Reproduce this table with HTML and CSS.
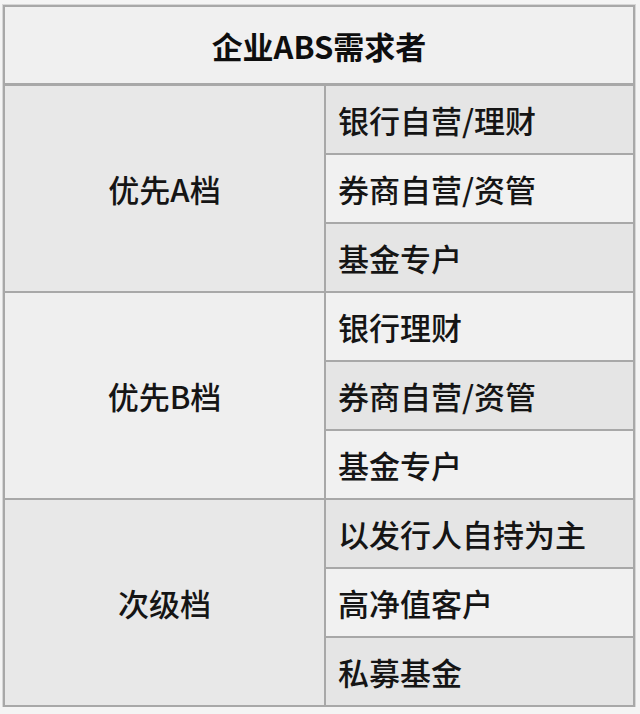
FILE: index.html
```html
<!DOCTYPE html>
<html lang="zh">
<head>
<meta charset="utf-8">
<link rel="stylesheet" href="styles.css">
</head>
<body>
<div class="table">
  <div class="head">企业ABS需求者</div>

  <div class="tier tier-a dark">优先A档</div>
  <div class="item dark">银行自营/理财</div>
  <div class="item light">券商自营/资管</div>
  <div class="item dark">基金专户</div>

  <div class="tier tier-b light">优先B档</div>
  <div class="item light">银行理财</div>
  <div class="item dark">券商自营/资管</div>
  <div class="item light">基金专户</div>

  <div class="tier tier-c dark">次级档</div>
  <div class="item dark">以发行人自持为主</div>
  <div class="item light">高净值客户</div>
  <div class="item dark">私募基金</div>
</div>
</body>
</html>
```

FILE: styles.css
```css
html, body {
  margin: 0;
  padding: 0;
  background: #f4f4f4;
}
body {
  padding: 5px 0 0 3px;
  font-family: "Noto Sans CJK SC", "Noto Sans", sans-serif;
  color: #151515;
}
.table {
  width: 632px;
  box-sizing: border-box;
  display: grid;
  grid-template-columns: 319px 307px;
  grid-template-rows: 77px repeat(9, 67px);
  gap: 2px;
  padding: 2px;
  background: #a8a8a8;
  box-shadow: 0 0 0 1px #d6d6d6;
}
.head {
  grid-column: 1 / 3;
  display: flex;
  align-items: center;
  justify-content: center;
  background: #f0f0f0;
  font-weight: 700;
  font-size: 31px;
  border-bottom: 1px solid #a8a8a8;
  color: #0e0e0e;
}
.tier {
  grid-column: 1;
  grid-row: span 3;
  display: flex;
  align-items: center;
  justify-content: center;
  font-size: 31px;
  font-weight: 500;
}
.item {
  grid-column: 2;
  display: flex;
  align-items: center;
  padding-left: 12px;
  font-size: 31px;
  font-weight: 500;
}
.dark { background: #e5e5e5; }
.light { background: #f1f1f1; }
.tier-a, .tier-c { background: #e8e8e8; }
.tier-b { background: #efefef; }
```
